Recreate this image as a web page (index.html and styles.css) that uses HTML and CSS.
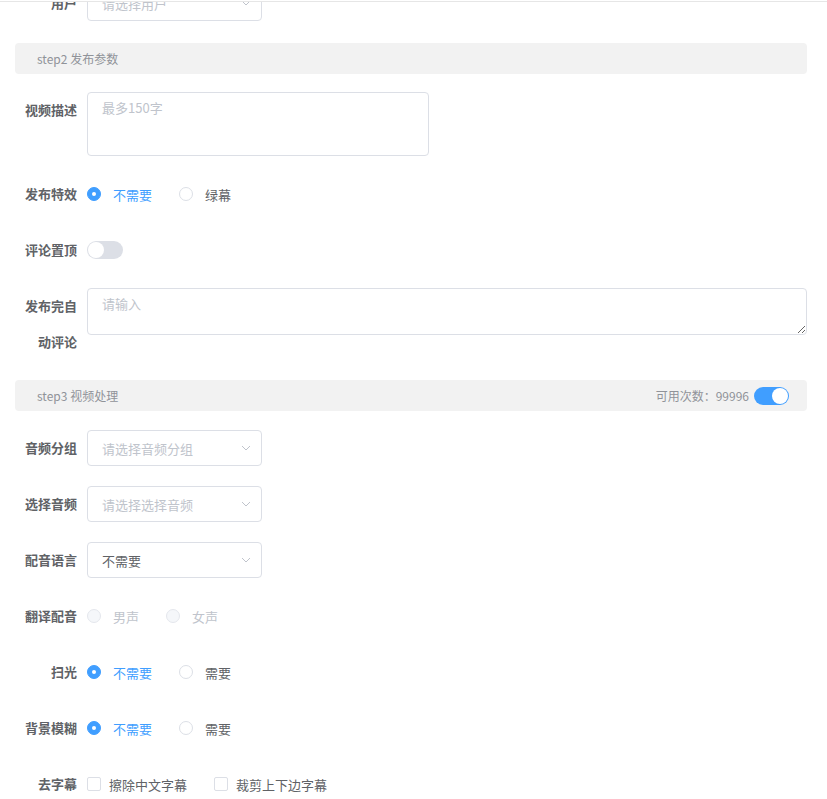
FILE: index.html
```html
<!DOCTYPE html>
<html lang="zh-CN">
<head>
<meta charset="utf-8">
<title>发布参数</title>
<link rel="stylesheet" href="styles.css">
</head>
<body>
<div class="topline"></div>
<div class="page">
  <div class="item">
    <div class="label">用户</div>
    <div class="content">
      <div class="select"><span class="ph">请选择用户</span><svg class="arrow" viewBox="0 0 10 6"><path d="M1 1 L5 5 L9 1" fill="none" stroke="#c0c4cc" stroke-width="1"/></svg></div>
    </div>
  </div>

  <div class="section first">
    <span>step2 发布参数</span>
  </div>

  <div class="item">
    <div class="label">视频描述</div>
    <div class="content">
      <textarea class="textarea short" placeholder="最多150字"></textarea>
    </div>
  </div>

  <div class="item">
    <div class="label">发布特效</div>
    <div class="content row">
      <label class="radio checked"><span class="dot"></span><span class="rtext">不需要</span></label>
      <label class="radio"><span class="dot"></span><span class="rtext">绿幕</span></label>
    </div>
  </div>

  <div class="item">
    <div class="label">评论置顶</div>
    <div class="content row">
      <span class="switch"><span class="knob"></span></span>
    </div>
  </div>

  <div class="item">
    <div class="label">发布完自动评论</div>
    <div class="content">
      <textarea class="textarea wide" placeholder="请输入"></textarea>
    </div>
  </div>

  <div class="section second">
    <span>step3 视频处理</span>
    <span class="quota">可用次数：99996 <span class="switch on small"><span class="knob"></span></span></span>
  </div>

  <div class="item">
    <div class="label">音频分组</div>
    <div class="content">
      <div class="select"><span class="ph">请选择音频分组</span><svg class="arrow" viewBox="0 0 10 6"><path d="M1 1 L5 5 L9 1" fill="none" stroke="#c0c4cc" stroke-width="1"/></svg></div>
    </div>
  </div>

  <div class="item">
    <div class="label">选择音频</div>
    <div class="content">
      <div class="select"><span class="ph">请选择选择音频</span><svg class="arrow" viewBox="0 0 10 6"><path d="M1 1 L5 5 L9 1" fill="none" stroke="#c0c4cc" stroke-width="1"/></svg></div>
    </div>
  </div>

  <div class="item">
    <div class="label">配音语言</div>
    <div class="content">
      <div class="select"><span class="val">不需要</span><svg class="arrow" viewBox="0 0 10 6"><path d="M1 1 L5 5 L9 1" fill="none" stroke="#c0c4cc" stroke-width="1"/></svg></div>
    </div>
  </div>

  <div class="item">
    <div class="label">翻译配音</div>
    <div class="content row">
      <label class="radio disabled"><span class="dot"></span><span class="rtext">男声</span></label>
      <label class="radio disabled"><span class="dot"></span><span class="rtext">女声</span></label>
    </div>
  </div>

  <div class="item">
    <div class="label">扫光</div>
    <div class="content row">
      <label class="radio checked"><span class="dot"></span><span class="rtext">不需要</span></label>
      <label class="radio"><span class="dot"></span><span class="rtext">需要</span></label>
    </div>
  </div>

  <div class="item">
    <div class="label">背景模糊</div>
    <div class="content row">
      <label class="radio checked"><span class="dot"></span><span class="rtext">不需要</span></label>
      <label class="radio"><span class="dot"></span><span class="rtext">需要</span></label>
    </div>
  </div>

  <div class="item">
    <div class="label">去字幕</div>
    <div class="content row">
      <label class="checkbox"><span class="box"></span><span class="ctext">擦除中文字幕</span></label>
      <label class="checkbox"><span class="box"></span><span class="ctext">裁剪上下边字幕</span></label>
    </div>
  </div>
</div>
</body>
</html>
```

FILE: styles.css
```css
html, body {
  margin: 0;
  padding: 0;
  background: #ffffff;
  height: 799px;
  overflow: hidden;
}

body {
  font-family: "Noto Sans CJK SC", "Liberation Sans", sans-serif;
  font-size: 13px;
  color: #606266;
}

.topline {
  position: fixed;
  top: 0;
  left: 0;
  right: 0;
  height: 1px;
  background: #ffffff;
  border-bottom: 1px solid #e6e6e6;
  z-index: 5;
}

.page {
  margin-top: -15px;
  padding: 0 20px 0 15px;
}

.item {
  display: flex;
  margin-bottom: 20px;
}

.label {
  flex: none;
  width: 72px;
  box-sizing: border-box;
  padding-right: 10px;
  text-align: right;
  line-height: 36px;
  font-size: 13px;
  font-weight: 700;
  color: #606266;
}

.content {
  flex: 1;
  min-width: 0;
  min-height: 36px;
}

.content.row {
  display: flex;
  align-items: center;
}

.select {
  width: 175px;
  height: 36px;
  box-sizing: border-box;
  border: 1px solid #dcdfe6;
  border-radius: 4px;
  padding: 0 10px 0 14px;
  display: flex;
  align-items: center;
  justify-content: space-between;
  background: #fff;
}

.select .ph {
  color: #c0c4cc;
}

.select .val {
  color: #606266;
}

.arrow {
  width: 10px;
  height: 6px;
}

.textarea {
  display: block;
  box-sizing: border-box;
  border: 1px solid #dcdfe6;
  border-radius: 4px;
  padding: 5px 14px;
  font-family: "Noto Sans CJK SC", "Liberation Sans", sans-serif;
  font-size: 13px;
  line-height: 1.5;
  color: #606266;
  background: #fff;
  margin: 0;
  outline: none;
}

.textarea::placeholder {
  color: #c0c4cc;
}

.textarea.short {
  width: 342px;
  height: 64px;
  resize: none;
}

.textarea.wide {
  width: 100%;
  height: 47px;
  resize: vertical;
}

.section {
  height: 31px;
  box-sizing: border-box;
  background: #f2f2f2;
  border-radius: 4px;
  padding: 0 18px 0 22px;
  display: flex;
  align-items: center;
  justify-content: space-between;
  font-size: 12px;
  color: #909399;
}

.section.first {
  margin-top: 22px;
  margin-bottom: 18px;
}

.section.second {
  margin-bottom: 19px;
}

.quota {
  display: flex;
  align-items: center;
  gap: 5px;
}

.radio {
  display: inline-flex;
  align-items: center;
  margin-right: 27px;
  line-height: 1;
}

.radio .dot {
  width: 14px;
  height: 14px;
  box-sizing: border-box;
  border: 1px solid #dcdfe6;
  border-radius: 50%;
  background: #fff;
  display: inline-flex;
  align-items: center;
  justify-content: center;
}

.radio .rtext {
  padding-left: 12px;
  color: #606266;
}

.radio.checked .dot {
  background: #409eff;
  border-color: #409eff;
}

.radio.checked .dot::after {
  content: "";
  width: 4px;
  height: 4px;
  border-radius: 50%;
  background: #fff;
}

.radio.checked .rtext {
  color: #409eff;
}

.radio.disabled .dot {
  background: #f5f7fa;
  border-color: #e4e7ed;
}

.radio.disabled .rtext {
  color: #c0c4cc;
}

.checkbox {
  display: inline-flex;
  align-items: center;
  margin-right: 27px;
  line-height: 1;
}

.checkbox .box {
  width: 14px;
  height: 14px;
  box-sizing: border-box;
  border: 1px solid #dcdfe6;
  border-radius: 2px;
  background: #fff;
}

.checkbox .ctext {
  padding-left: 8px;
  color: #606266;
}

.switch {
  display: inline-block;
  width: 36px;
  height: 18px;
  box-sizing: border-box;
  border-radius: 9px;
  background: #dcdfe6;
  padding: 1px;
}

.switch .knob {
  display: block;
  width: 16px;
  height: 16px;
  border-radius: 50%;
  background: #fff;
}

.switch.on {
  background: #409eff;
  display: inline-flex;
  justify-content: flex-end;
}

.switch.small {
  width: 35px;
}
```
